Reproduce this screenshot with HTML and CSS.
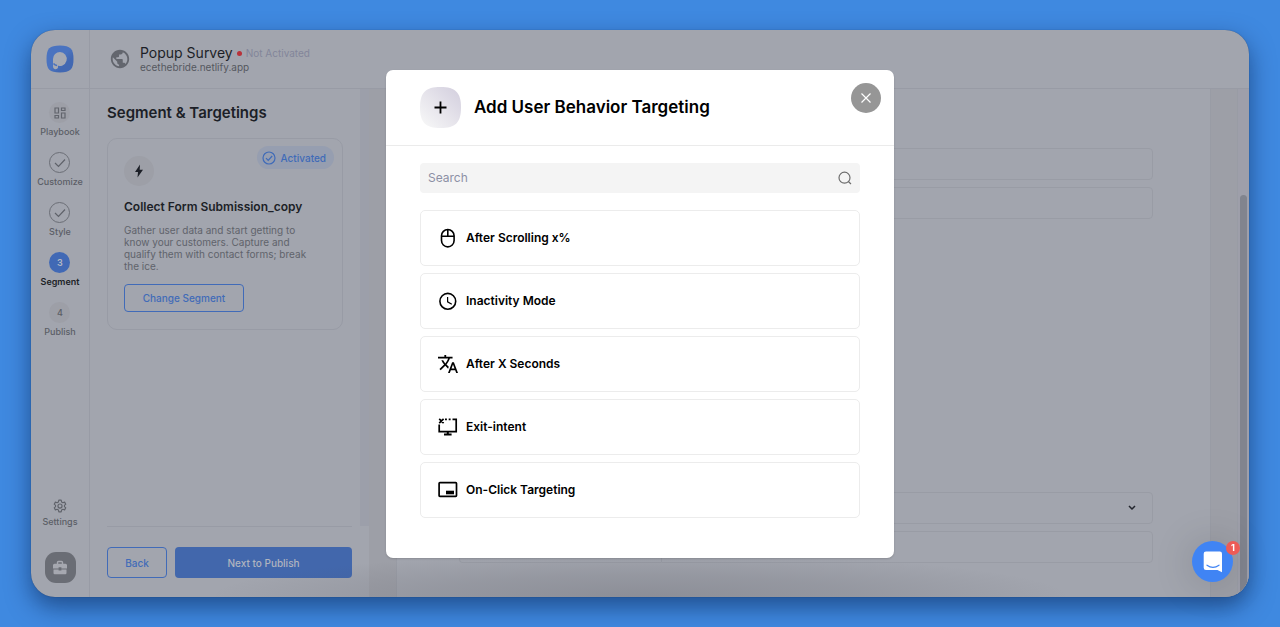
FILE: index.html
```
<!DOCTYPE html>
<html lang="en">
<head>
    <meta charset="UTF-8">
    <title>Popup Survey - Segment &amp; Targetings</title>
    <link rel="stylesheet" href="styles.css">
</head>
<body>
    <div class="window">
        <aside class="rail">
            <a href="#" class="logo" aria-label="Home">
                <svg width="28" height="28" viewBox="0 0 28 28">
                    <defs>
                        <linearGradient id="logoFill" x1="0" y1="0" x2="1" y2="1">
                            <stop offset="0.5" stop-color="#4a73c0"/>
                            <stop offset="0.7" stop-color="#4268b2"/>
                        </linearGradient>
                    </defs>
                    <path fill="url(#logoFill)" d="M14 0.500C24.500 0.500 27.500 4 27.500 14S24.500 27.500 14 27.500 0.500 24.500 0.500 14 3.500 0.500 14 0.500z"/>
                    <path fill="#a6a9b2" d="M14 7a7 7 0 1 1-3.500 13.200c1.400.2 1.900 1.400 1.500 2.400-.5 1.400-2.200 2-3.500 1.300-1.200-.6-1.500-1.700-1.500-3V14A7 7 0 0 1 14 7z"/>
                    <path d="M7.500 18.500c1 1.300 2 1.800 3.500 2" stroke="#4a71bc" stroke-width="1.500" fill="none"/>
                </svg>
            </a>
            <nav class="steps">
                <a href="#" class="step">
                    <span class="dot soft">
                        <svg width="12" height="12" viewBox="0 0 12 12" fill="none" stroke="#62656d" stroke-width="1.200">
                            <path d="M1 1h3.500v5H1zM7.500 1H11v2.500H7.500zM1 8.500h3.500V11H1zM7.500 6H11v5H7.500z"/>
                        </svg>
                    </span>
                    Playbook
                </a>
                <a href="#" class="step">
                    <span class="dot done">
                        <svg width="12" height="10" viewBox="0 0 12 10" fill="none" stroke="#5f626a" stroke-width="1.200"><path d="M1 5l3.500 3.500L11 1.500"/></svg>
                    </span>
                    Customize
                </a>
                <a href="#" class="step">
                    <span class="dot done">
                        <svg width="12" height="10" viewBox="0 0 12 10" fill="none" stroke="#5f626a" stroke-width="1.200"><path d="M1 5l3.500 3.500L11 1.500"/></svg>
                    </span>
                    Style
                </a>
                <a href="#" class="step active"><span class="dot current">3</span>Segment</a>
                <a href="#" class="step"><span class="dot soft">4</span>Publish</a>
            </nav>
            <a href="#" class="settings">
                <svg width="14" height="14" viewBox="0 0 24 24" fill="none" stroke="#5f626a" stroke-width="2" stroke-linejoin="round">
                    <path d="M10 2h4l.7 3.100 2.200 1.300 3-1 2 3.500-2.300 2.100v2l2.300 2.100-2 3.500-3-1-2.200 1.300L14 22h-4l-.7-3.100-2.200-1.300-3 1-2-3.500L4.400 13v-2L2.100 8.900l2-3.500 3 1 2.200-1.300z"/>
                    <circle cx="12" cy="12" r="3.500"/>
                </svg>
                Settings
            </a>
            <button class="toolbox" aria-label="Toolbox">
                <svg width="16" height="16" viewBox="0 0 16 16">
                    <path d="M5.500 4V2.500a1 1 0 0 1 1-1h3a1 1 0 0 1 1 1V4" fill="none" stroke="#a6a8b0" stroke-width="1.400"/>
                    <path fill="#a6a8b0" d="M2.500 3.800h11A1.500 1.500 0 0 1 15 5.300V8.400H9.400V7.300H6.600v1.100H1V5.300a1.500 1.500 0 0 1 1.500-1.500zM1.500 9.400h5.100v1.200h2.800V9.400h5.100V13a1.200 1.200 0 0 1-1.200 1.200H2.700A1.200 1.200 0 0 1 1.500 13z"/>
                </svg>
            </button>
        </aside>

        <div class="content">
            <header class="topbar">
                <svg class="globe" width="22" height="22" viewBox="0 0 24 24" fill="#63666e">
                    <path d="M12 2C6.480 2 2 6.480 2 12s4.480 10 10 10 10-4.480 10-10S17.520 2 12 2zm-1 17.930c-3.950-.49-7-3.850-7-7.930 0-.62.080-1.210.21-1.790L9 15v1c0 1.100.9 2 2 2v1.930zm6.900-2.540c-.26-.81-1-1.390-1.900-1.390h-1v-3c0-.55-.45-1-1-1H8v-2h2c.55 0 1-.45 1-1V7h2c1.100 0 2-.9 2-2v-.41c2.930 1.190 5 4.060 5 7.410 0 2.080-.8 3.970-2.100 5.390z"/>
                </svg>
                <div>
                    <div class="title-row">
                        <h1>Popup Survey</h1>
                        <span class="red-dot"></span>
                        <span class="state">Not Activated</span>
                    </div>
                    <div class="domain">ecethebride.netlify.app</div>
                </div>
            </header>

            <div class="workspace">
                <section class="panel">
                    <div class="panel-scroll">
                        <h2>Segment &amp; Targetings</h2>
                        <article class="card">
                            <div class="card-top">
                                <span class="bolt">
                                    <svg width="10" height="14" viewBox="0 0 10 14" fill="#1c1f27"><path d="M6 0.500L1 8h3L3.500 13.500 9 5.800H5.700z"/></svg>
                                </span>
                                <span class="badge">
                                    <svg width="14" height="14" viewBox="0 0 14 14" fill="none" stroke="#3f6bb8" stroke-width="1.200"><circle cx="7" cy="7" r="6"/><path d="M4 7.200l2.200 2.200L10.200 5"/></svg>
                                    Activated
                                </span>
                            </div>
                            <h3>Collect Form Submission_copy</h3>
                            <p>Gather user data and start getting to know your customers. Capture and qualify them with contact forms; break the ice.</p>
                            <button class="btn outline">Change Segment</button>
                        </article>
                    </div>
                    <div class="panel-footer">
                        <button class="btn outline">Back</button>
                        <button class="btn solid">Next to Publish</button>
                    </div>
                </section>

                <main class="board">
                    <form class="sheet">
                        <div class="field-group">
                            <input type="text" aria-label="Audience rule">
                            <input type="text" aria-label="Behavior rule">
                        </div>
                        <div class="field-group">
                            <div class="select-wrap">
                                <select aria-label="Frequency"><option></option></select>
                                <svg width="8" height="6" viewBox="0 0 8 6" fill="none" stroke="#23262e" stroke-width="1.500"><path d="M1 1l3 3 3-3"/></svg>
                            </div>
                            <div class="joined">
                                <input type="text" aria-label="Frequency value">
                                <input type="text" aria-label="Frequency unit">
                            </div>
                        </div>
                    </form>
                    <div class="scrollbar"><span class="thumb"></span></div>
                </main>
            </div>
        </div>

        <div class="overlay">
            <div class="modal" role="dialog" aria-labelledby="modalTitle">
                <div class="modal-header">
                    <svg class="plus" width="41" height="41" viewBox="0 0 41 41">
                        <defs>
                            <linearGradient id="plusFill" x1="1" y1="0" x2="0" y2="1">
                                <stop offset="0.1" stop-color="#d6d2e0"/>
                                <stop offset="0.9" stop-color="#f5f5f6"/>
                            </linearGradient>
                        </defs>
                        <path fill="url(#plusFill)" d="M20.500 0C35.500 0 41 5.500 41 20.500S35.500 41 20.500 41 0 35.500 0 20.500 5.500 0 20.500 0z"/>
                        <path d="M20.500 14.500v12M14.500 20.500h12" stroke="#000" stroke-width="1.800"/>
                    </svg>
                    <h2 id="modalTitle">Add User Behavior Targeting</h2>
                    <button class="close" aria-label="Close">
                        <svg width="12" height="12" viewBox="0 0 12 12" stroke="#fff" stroke-width="1.200"><path d="M1.500 1.500l9 9M10.500 1.500l-9 9"/></svg>
                    </button>
                </div>
                <div class="modal-body">
                    <label class="search">
                        <input type="text" placeholder="Search" aria-label="Search">
                        <svg width="14" height="14" viewBox="0 0 14 14" fill="none" stroke="#6d6d6d" stroke-width="1.200"><circle cx="6.500" cy="6.700" r="5.500"/><path d="M10.600 10.800L13 13"/></svg>
                    </label>
                    <div class="options">
                        <button class="option">
                            <svg width="20" height="20" viewBox="0 0 20 20" fill="none" stroke="#000" stroke-width="1.600"><rect x="3.500" y="1.500" width="12.600" height="17.400" rx="6.300"/><path d="M3.500 8.200h12.600M9.800 1.500v6.700"/></svg>
                            After Scrolling x%
                        </button>
                        <button class="option">
                            <svg width="20" height="20" viewBox="0 0 20 20" fill="none" stroke="#000" stroke-width="1.600"><circle cx="9.800" cy="10.300" r="7.900"/><path d="M9.600 6v4.800l4.200 2.400" stroke-width="1.200"/></svg>
                            Inactivity Mode
                        </button>
                        <button class="option">
                            <svg width="20" height="20" viewBox="1 1 22 22" fill="#000"><path d="M12.870 15.070l-2.540-2.510.03-.03c1.740-1.940 2.980-4.170 3.710-6.530H17V4h-7V2H8v2H1v1.990h11.170C11.500 7.920 10.440 9.750 9 11.350 8.070 10.320 7.300 9.190 6.690 8h-2c.73 1.630 1.730 3.170 2.980 4.560l-5.090 5.020L4 19l5-5 3.110 3.110.76-2.040zM18.500 10h-2L12 22h2l1.120-3h4.750L21 22h2l-4.500-12zm-2.620 7l1.620-4.330L19.120 17h-3.240z"/></svg>
                            After X Seconds
                        </button>
                        <button class="option">
                            <svg width="20" height="20" viewBox="0 0 20 20" fill="none" stroke="#000" stroke-width="1.700"><path d="M1.200 7.500v7.100h17V2.300H14.500M7 2.300h1.900M10.700 2.300h1.900M1.200 1.800l4.400 4.400M5.600 1.800L1.200 6.200"/><path d="M9.800 15v2.500M6 17.600h7.600" stroke-width="2"/></svg>
                            Exit-intent
                        </button>
                        <button class="option">
                            <svg width="20" height="20" viewBox="0 0 20 20"><rect x="1.100" y="2.700" width="17.400" height="13.600" rx="0.800" fill="none" stroke="#000" stroke-width="1.700"/><path d="M8 10.700h8v3.600H8z"/></svg>
                            On-Click Targeting
                        </button>
                    </div>
                </div>
            </div>
        </div>
    </div>

    <button class="chat" aria-label="Open chat">
        <svg width="20" height="22" viewBox="0 0 20 22">
            <path fill="#fff" d="M3 0.500h13.500A2.300 2.300 0 0 1 19 2.800V21.200L14.500 19H3a2.300 2.300 0 0 1-2.300-2.300V2.800A2.300 2.300 0 0 1 3 0.500z"/>
            <path d="M4 14.200c3.600 2.600 8.300 2.600 12 0" fill="none" stroke="#4084f4" stroke-width="1.200" stroke-linecap="round"/>
        </svg>
        <span class="count">1</span>
    </button>
</body>
</html>
```

FILE: styles.css
```
* {
    margin: 0;
    padding: 0;
    box-sizing: border-box;
}

body {
    font-family: Inter, 'Liberation Sans', sans-serif;
    background: #3f89e0;
    height: 100vh;
    padding: 30px 31px;
    color: #1c1f27;
}

a {
    color: inherit;
    text-decoration: none;
}

button,
input,
select {
    font: inherit;
}

button {
    cursor: pointer;
}

.window {
    position: relative;
    display: flex;
    height: 100%;
    background: #a2a5ae;
    border-radius: 24px;
    box-shadow: 0 10px 24px rgba(0, 20, 60, 0.5), 0 0 1px rgba(0, 20, 60, 0.5);
    overflow: hidden;
}

/* left rail */
.rail {
    display: flex;
    flex-direction: column;
    align-items: center;
    width: 59px;
    flex-shrink: 0;
    border-right: 1px solid #989ba5;
    padding-bottom: 14px;
}

.logo {
    display: flex;
    align-items: center;
    justify-content: center;
    width: 100%;
    height: 59px;
    border-bottom: 1px solid #989ba5;
}

.steps {
    display: flex;
    flex-direction: column;
    gap: 14px;
    padding-top: 13px;
}

.step,
.settings {
    display: flex;
    flex-direction: column;
    align-items: center;
    gap: 3px;
    font-size: 9px;
    line-height: 12px;
    font-weight: 500;
    color: #5b5e66;
}

.step.active {
    color: #1c1f27;
    font-weight: 600;
}

.dot {
    display: flex;
    align-items: center;
    justify-content: center;
    width: 21px;
    height: 21px;
    border-radius: 50%;
}

.soft {
    background: #9d9fa7;
}

.done {
    border: 1px solid #6b6e76;
}

.current {
    background: #4169b5;
    color: #b5b9c4;
}

.settings {
    margin-top: auto;
}

.toolbox {
    display: flex;
    align-items: center;
    justify-content: center;
    width: 31px;
    height: 31px;
    margin-top: 24px;
    border: none;
    border-radius: 11px;
    background: #6a6d75;
}

/* top bar */
.content {
    flex: 1;
    display: flex;
    flex-direction: column;
    min-width: 0;
}

.topbar {
    display: flex;
    align-items: center;
    gap: 9px;
    height: 59px;
    padding-left: 19px;
    border-bottom: 1px solid #989ba5;
}

.title-row {
    display: flex;
    align-items: center;
}

.title-row h1 {
    font-size: 14px;
    line-height: 16px;
    font-weight: 400;
}

.red-dot {
    width: 5px;
    height: 5px;
    margin: 0 4px;
    border-radius: 50%;
    background: #b8323a;
}

.state {
    font-size: 10px;
    line-height: 16px;
    color: #83869a;
}

.domain {
    font-size: 10px;
    line-height: 12px;
    color: #55585f;
}

/* segment panel */
.workspace {
    flex: 1;
    display: flex;
    min-height: 0;
}

.panel {
    display: flex;
    flex-direction: column;
    width: 279px;
    flex-shrink: 0;
}

.panel-scroll {
    flex: 1;
    padding: 15px 17px 0;
    border-right: 9px solid #9c9faa;
}

.panel h2 {
    font-size: 15px;
    line-height: 18px;
    font-weight: 600;
    margin-bottom: 16px;
}

.card {
    border: 1px solid #989ba5;
    border-radius: 10px;
    padding: 7px 8px 17px 16px;
}

.card-top {
    display: flex;
    align-items: flex-start;
    justify-content: space-between;
}

.bolt {
    display: flex;
    align-items: center;
    justify-content: center;
    width: 30px;
    height: 30px;
    margin-top: 10px;
    border-radius: 50%;
    background: #9d9fa7;
}

.badge {
    display: flex;
    align-items: center;
    gap: 5px;
    height: 23px;
    padding: 0 8px 0 5px;
    border-radius: 12px;
    background: #969eb0;
    color: #3f6bb8;
    font-size: 10px;
    font-weight: 500;
}

.card h3 {
    font-size: 12px;
    line-height: 16px;
    font-weight: 600;
    margin: 13px 0 9px;
}

.card p {
    max-width: 190px;
    font-size: 10px;
    line-height: 12px;
    color: #60636b;
    margin-bottom: 12px;
}

.btn {
    font-size: 10px;
    font-weight: 500;
    border-radius: 4px;
    height: 31px;
}

.outline {
    border: 1px solid #416bb8;
    background: transparent;
    color: #416bb8;
}

.card .outline {
    width: 120px;
    height: 28px;
}

.panel-footer {
    display: flex;
    gap: 8px;
    margin: 0 17px;
    padding: 20px 0 19px;
    border-top: 1px solid #989ba5;
}

.panel-footer .outline {
    width: 60px;
}

.solid {
    flex: 1;
    border: none;
    background: #4267ac;
    color: #b0b4bf;
}

/* targeting board */
.board {
    flex: 1;
    display: flex;
    background: #9d9fa7;
    min-width: 0;
}

.sheet {
    flex: 1;
    display: flex;
    flex-direction: column;
    justify-content: space-between;
    margin: 0 26px 0 27px;
    padding: 59px 57px 34px 62px;
    background: #a2a5ae;
    border-left: 1px solid #999ca5;
    border-right: 1px solid #999ca5;
}

.field-group {
    display: flex;
    flex-direction: column;
    gap: 7px;
}

.field-group input,
.field-group select {
    width: 100%;
    height: 32px;
    border: 1px solid #999ca5;
    border-radius: 4px;
    background: transparent;
    appearance: none;
}

.select-wrap {
    display: flex;
    position: relative;
}

.select-wrap svg {
    position: absolute;
    right: 17px;
    top: 13px;
    pointer-events: none;
}

.joined {
    display: flex;
}

.joined input:first-child {
    width: 202px;
    border-right: none;
    border-radius: 4px 0 0 4px;
}

.joined input:last-child {
    flex: 1;
    border-radius: 0 4px 4px 0;
}

.scrollbar {
    display: flex;
    width: 12px;
    padding: 106px 2px 0;
    background: #9e9faa;
    border-left: 1px solid #999ca5;
}

.thumb {
    flex: 1;
    border-radius: 4px 4px 0 0;
    background: #81848e;
}

/* dialog */
.overlay {
    position: absolute;
    inset: 0;
    display: flex;
    align-items: center;
    justify-content: center;
    background: radial-gradient(ellipse 430px 44px at 50% 100%, rgba(70, 70, 78, 0.24), rgba(70, 70, 78, 0.14) 50%, transparent);
}

.modal {
    width: 508px;
    max-width: 90%;
    background: #fff;
    border-radius: 7px;
    box-shadow: 0 1px 2px rgba(0, 0, 0, 0.15);
}

.modal-header {
    position: relative;
    display: flex;
    align-items: center;
    gap: 13px;
    padding: 17px 34px;
    border-bottom: 1px solid #ebebeb;
}

.modal-header h2 {
    font-size: 17px;
    line-height: 24px;
    font-weight: 600;
    color: #000;
}

.close {
    position: absolute;
    top: 13px;
    right: 13px;
    display: flex;
    align-items: center;
    justify-content: center;
    width: 30px;
    height: 30px;
    border: none;
    border-radius: 50%;
    background: #969696;
}

.modal-body {
    padding: 17px 34px 40px;
}

.search {
    display: flex;
    align-items: center;
    height: 30px;
    padding: 0 8px;
    border-radius: 4px;
    background: #f4f4f4;
    margin-bottom: 17px;
}

.search input {
    flex: 1;
    border: none;
    outline: none;
    background: transparent;
    font-size: 12px;
}

.search input::placeholder {
    color: #8c90a5;
}

.options {
    display: flex;
    flex-direction: column;
    gap: 7px;
}

.option {
    display: flex;
    align-items: center;
    gap: 8px;
    height: 56px;
    padding: 0 17px;
    border: 1px solid #ececec;
    border-radius: 5px;
    background: #fff;
    font-size: 12px;
    font-weight: 600;
    color: #000;
}

/* chat launcher */
.chat {
    position: fixed;
    right: 47px;
    bottom: 45px;
    display: flex;
    align-items: center;
    justify-content: center;
    width: 41px;
    height: 41px;
    border: none;
    border-radius: 50%;
    background: #4084f4;
    box-shadow: 0 2px 40px rgba(0, 0, 0, 0.18);
}

.count {
    position: absolute;
    top: 0;
    right: -7px;
    width: 14px;
    height: 14px;
    border-radius: 50%;
    background: #ed5b56;
    color: #fff;
    font-size: 9px;
    line-height: 14px;
    font-weight: 700;
}
```
